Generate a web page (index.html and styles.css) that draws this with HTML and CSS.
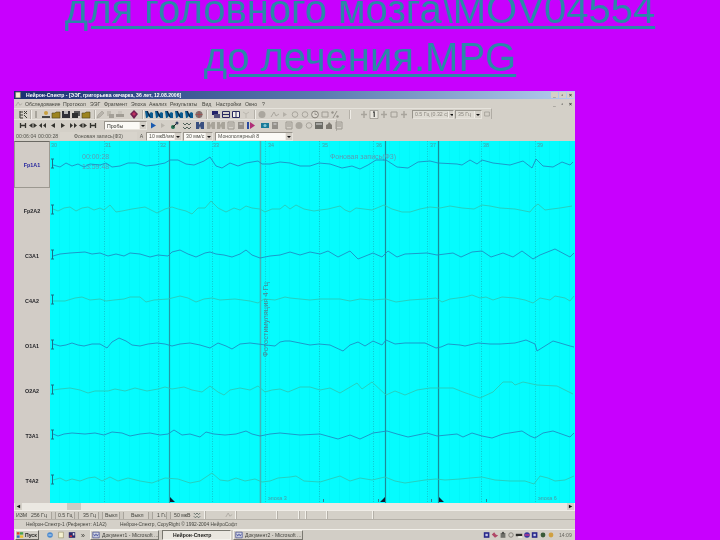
FILE: index.html
```html
<!DOCTYPE html>
<html lang="ru">
<head>
<meta charset="utf-8">
<title>Нейрон-Спектр</title>
<link rel="stylesheet" href="styles.css">
</head>
<body>
<svg class="sprite" aria-hidden="true">
  <symbol id="tree" viewBox="0 0 10 9"><path d="M2 1v7M2 2h3M2 5h3M2 8h3M6 1l3 3M6 4l3-3M6 5l3 3" stroke="#3b3b33" fill="none"/></symbol>
  <symbol id="bulb" viewBox="0 0 10 9"><circle cx="5" cy="3" r="2.4" fill="#3a3a3a"/><path d="M3 6h4v2H3z" fill="#7c7a60"/></symbol>
  <symbol id="user" viewBox="0 0 10 9"><circle cx="5" cy="3" r="2" fill="#c8a040"/><path d="M1 8h8V6H1z" fill="#444"/></symbol>
  <symbol id="folder" viewBox="0 0 10 9"><path d="M1 3h3l1-1h4v6H1z" fill="#9c8420" stroke="#4a4420" stroke-width=".6"/></symbol>
  <symbol id="save" viewBox="0 0 10 9"><path d="M1 1h8v7H1z" fill="#2f2f38"/><path d="M3 1h4v3H3z" fill="#b8b8b8"/></symbol>
  <symbol id="pages" viewBox="0 0 10 9"><path d="M3 1h6v5H3z" fill="#555"/><path d="M1 3h6v5H1z" fill="#2f2f2f"/></symbol>
  <symbol id="pencil" viewBox="0 0 10 9"><path d="M2 8l1-3 4-4 2 2-4 4z" fill="#b8b4ac" stroke="#96928a" stroke-width=".5"/></symbol>
  <symbol id="copy" viewBox="0 0 10 9"><path d="M2 1h4v5H2z" fill="#bdb9b0"/><path d="M4 4h5v4H4z" fill="#a4a098"/></symbol>
  <symbol id="print" viewBox="0 0 10 9"><path d="M1 4h8v3H1z" fill="#a09c94"/><path d="M3 1h4v3H3z" fill="#c8c4bc"/></symbol>
  <symbol id="gem" viewBox="0 0 10 9"><path d="M5 0l4 4-4 5-4-5z" fill="#702050"/><path d="M3 4l2-2 2 2-2 2z" fill="#c03060"/></symbol>
  <symbol id="fig" viewBox="0 0 10 9"><path d="M1 1h3l1 3 2-2 2 1v5H6L5 6 3 8H2z" fill="#0a5a90"/><path d="M3 1l3 6" stroke="#101830"/></symbol>
  <symbol id="ball" viewBox="0 0 10 9"><circle cx="5" cy="4.500" r="3.500" fill="#807070"/><path d="M1.500 4.500h7M5 1v7" stroke="#a84848" stroke-width=".7"/></symbol>
  <symbol id="w1" viewBox="0 0 10 9"><path d="M1 1h6v4H1z" fill="#22226a"/><path d="M3 4h6v4H3z" fill="#505078"/></symbol>
  <symbol id="w2" viewBox="0 0 10 9"><path d="M1.500 1.500h7v6h-7zM1.500 4.500h7" fill="none" stroke="#2a2a60"/></symbol>
  <symbol id="w3" viewBox="0 0 10 9"><path d="M1.500 1.500h7v6h-7zM5 1.500v6" fill="#f2f0ea" stroke="#2a2a60"/></symbol>
  <symbol id="gx" viewBox="0 0 10 9"><path d="M2 2l3 2 3-2M5 4v4" stroke="#bcb8b0" fill="none"/></symbol>
  <symbol id="gc" viewBox="0 0 10 9"><circle cx="5" cy="4.500" r="3.500" fill="#aaa69e"/></symbol>
  <symbol id="gr" viewBox="0 0 10 9"><circle cx="5" cy="4.500" r="2.800" fill="none" stroke="#a8a49c"/></symbol>
  <symbol id="gt" viewBox="0 0 10 9"><path d="M3 2l4 2.500L3 7z" fill="#b4b0a8"/></symbol>
  <symbol id="gw" viewBox="0 0 10 9"><path d="M1 7l3-5 2 4 3-2" fill="none" stroke="#aaa69e"/></symbol>
  <symbol id="clock" viewBox="0 0 10 9"><circle cx="5" cy="4.500" r="3.400" fill="#dcd8d0" stroke="#85817a"/><path d="M5 2.500v2h2" stroke="#85817a" fill="none" stroke-width=".7"/></symbol>
  <symbol id="sq" viewBox="0 0 10 9"><path d="M2 2h6v5H2z" fill="none" stroke="#a09c94"/></symbol>
  <symbol id="pct" viewBox="0 0 10 9"><path d="M7 1L3 8" stroke="#96928a"/><circle cx="2.500" cy="2.500" r="1.200" fill="#96928a"/><circle cx="7.500" cy="6.500" r="1.200" fill="#96928a"/></symbol>
  <symbol id="bars" viewBox="0 0 10 9"><path d="M4 1h2v7H4z" fill="#a8a49c"/></symbol>
  <symbol id="cross" viewBox="0 0 10 9"><path d="M5 1v7M2 4.500h6" stroke="#a8a49c" stroke-width="1.500"/></symbol>
  <symbol id="one" viewBox="0 0 10 9"><path d="M1 .5h8v8H1z" fill="#e8e5de" stroke="#85817a" stroke-width=".6"/><path d="M4 2.500l1.200-1V7" stroke="#222" fill="none"/></symbol>
  <symbol id="n1" viewBox="0 0 10 9"><path d="M2.500 2v5M7.500 2v5M2.500 4.500h5" stroke="#33332e" stroke-width="1.300"/></symbol>
  <symbol id="n2" viewBox="0 0 10 9"><path d="M1 4.500L4.500 2v5zM9 4.500L5.500 2v5z" fill="#33332e"/></symbol>
  <symbol id="n3" viewBox="0 0 10 9"><path d="M1 4.500L4 2v5zM5 4.500L8 2v5z" fill="#33332e"/></symbol>
  <symbol id="n4" viewBox="0 0 10 9"><path d="M3 4.500L7 2v5z" fill="#33332e"/></symbol>
  <symbol id="n5" viewBox="0 0 10 9"><path d="M7 4.500L3 2v5z" fill="#33332e"/></symbol>
  <symbol id="n6" viewBox="0 0 10 9"><path d="M9 4.500L6 2v5zM5 4.500L2 2v5z" fill="#33332e"/></symbol>
  <symbol id="b1" viewBox="0 0 10 9"><path d="M8 4.500L3 1.500v6z" fill="#1a5ab0"/></symbol>
  <symbol id="g1" viewBox="0 0 10 9"><path d="M7 4.500L3 2v5z" fill="#b8b4ac"/></symbol>
  <symbol id="gn" viewBox="0 0 10 9"><circle cx="3" cy="6" r="2" fill="#1e6e50"/><path d="M3 6l4-4" stroke="#222"/><circle cx="7" cy="2" r="1.500" fill="#304060"/></symbol>
  <symbol id="sw" viewBox="0 0 10 9"><path d="M1 2l2 2 2-2 2 2 2-2M1 6l2 2 2-2 2 2 2-2" fill="none" stroke="#50605a"/></symbol>
  <symbol id="bm" viewBox="0 0 10 9"><path d="M1 1h3v3l2-3h3v7H6L5 5 4 8H1z" fill="#3a5080"/></symbol>
  <symbol id="gm" viewBox="0 0 10 9"><path d="M1 1h3v3l2-3h3v7H6L5 5 4 8H1z" fill="#a8a49a"/></symbol>
  <symbol id="mg" viewBox="0 0 10 9"><path d="M1 1h2v7H1z" fill="#2a4aa0"/><path d="M4 1l5 3.500L4 8z" fill="#b03078"/></symbol>
  <symbol id="tl" viewBox="0 0 10 9"><path d="M1 2h8v5H1z" fill="#1a7a98"/><circle cx="5" cy="4.500" r="1.500" fill="#86c8d8"/></symbol>
  <symbol id="gp" viewBox="0 0 10 9"><path d="M2 1h6v7H2z" fill="#94908a"/><path d="M3.500 3h3" stroke="#ddd"/></symbol>
  <symbol id="gd" viewBox="0 0 10 9"><path d="M2 1h6v7H2z" fill="none" stroke="#9c9890"/><path d="M3 3h4M3 5h4" stroke="#9c9890"/></symbol>
  <symbol id="cal" viewBox="0 0 10 9"><path d="M1 1h8v7H1z" fill="#6c6c66"/><path d="M2 3h6" stroke="#ddd"/></symbol>
  <symbol id="hand" viewBox="0 0 10 9"><path d="M2 8V4l2-1 1-2 2 2 1 1v4z" fill="#7e7a72"/></symbol>
  <symbol id="flag" viewBox="0 0 10 9"><path d="M1 1h3.500v3H1z" fill="#d84828"/><path d="M5 1h4v3H5z" fill="#48a048"/><path d="M1 5h3.500v3H1z" fill="#3068c0"/><path d="M5 5h4v3H5z" fill="#e8c030"/></symbol>
  <symbol id="ie" viewBox="0 0 10 9"><circle cx="5" cy="4.500" r="3.500" fill="#4a8ad0"/><path d="M3 4.500h4" stroke="#e8f0f8"/></symbol>
  <symbol id="doc" viewBox="0 0 10 9"><path d="M2 1h6v7H2z" fill="#f4f0d0" stroke="#807a50" stroke-width=".6"/></symbol>
  <symbol id="mix" viewBox="0 0 10 9"><path d="M1 1h8v7H1z" fill="#28286c"/><path d="M2 5h3v2H2z" fill="#c83040"/><path d="M6 2h2v3H6z" fill="#d8d8e0"/></symbol>
  <symbol id="word" viewBox="0 0 10 9"><path d="M1 1h8v7H1z" fill="#d8dce8" stroke="#303888" stroke-width=".8"/><path d="M2 3l1.500 3L5 3l1.500 3L8 3" stroke="#2a3490" fill="none" stroke-width=".8"/></symbol>
  <symbol id="tdk" viewBox="0 0 10 9"><path d="M1 1h7v7H1z" fill="#28288a"/><path d="M3 3h3v3H3z" fill="#c8c8e8"/></symbol>
  <symbol id="tpk" viewBox="0 0 10 9"><path d="M1 4l3-3 2 3 3 1-4 3z" fill="#b04868"/></symbol>
  <symbol id="tgr" viewBox="0 0 10 9"><path d="M2 2h6v6H2z" fill="#70706a"/><circle cx="5" cy="2" r="1.500" fill="#50504c"/></symbol>
  <symbol id="tcl" viewBox="0 0 10 9"><circle cx="5" cy="4.500" r="2.800" fill="none" stroke="#78746c"/></symbol>
  <symbol id="tbk" viewBox="0 0 10 9"><path d="M1 3h8v3H1z" fill="#2c2c28"/><path d="M4 6h5v2H4z" fill="#f0f0e8"/></symbol>
  <symbol id="tmg" viewBox="0 0 10 9"><circle cx="5" cy="4.500" r="3.500" fill="#3838a0"/><path d="M2 4.500h6" stroke="#d83890" stroke-width="1.500"/></symbol>
  <symbol id="tgn" viewBox="0 0 10 9"><circle cx="5" cy="4.500" r="3" fill="#3a5a38"/></symbol>
  <symbol id="tyl" viewBox="0 0 10 9"><circle cx="5" cy="4.500" r="3" fill="#d0a040"/></symbol>
</svg>

<h1 class="headline"><a class="headline-link" href="#">для головного мозга\MOV04554<br>до лечения.MPG</a></h1>

<main class="app">
  <header class="titlebar">
    <svg class="ic-s"><use href="#doc"/></svg>
    <span class="title-text">Нейрон-Спектр - [ЭЭГ, григорьева овчарка, 36 лет, 12.08.2006]</span>
    <span class="win-btns"><b class="win-btn">_</b><b class="win-btn">▫</b><b class="win-btn">×</b></span>
  </header>
  <nav class="menubar">
    <svg class="ic-s menu-logo"><use href="#gw"/></svg>
    <span class="m1">Обследование</span><span class="m2">Протокол</span><span class="m3">ЭЭГ</span><span class="m4">Фрагмент</span><span class="m5">Эпоха</span><span class="m6">Анализ</span><span class="m7">Результаты</span><span class="m8">Вид</span><span class="m9">Настройки</span><span class="m10">Окно</span><span class="m11">?</span>
    <span class="win-btns"><b class="win-btn">_</b><b class="win-btn">▫</b><b class="win-btn">×</b></span>
  </nav>
  <div class="toolbar tb1">
    <svg class="ic"><use href="#tree"/></svg><i class="sep s1"></i>
    <svg class="ic"><use href="#bars"/></svg><svg class="ic"><use href="#user"/></svg><svg class="ic"><use href="#folder"/></svg><svg class="ic"><use href="#save"/></svg><svg class="ic"><use href="#pages"/></svg><svg class="ic"><use href="#folder"/></svg><i class="sep s2"></i>
    <svg class="ic"><use href="#pencil"/></svg><svg class="ic"><use href="#copy"/></svg><svg class="ic"><use href="#print"/></svg><svg class="ic gem"><use href="#gem"/></svg><i class="sep s3"></i>
    <svg class="ic first-d"><use href="#fig"/></svg><svg class="ic"><use href="#fig"/></svg><svg class="ic"><use href="#fig"/></svg><svg class="ic"><use href="#fig"/></svg><svg class="ic"><use href="#fig"/></svg><svg class="ic"><use href="#ball"/></svg><i class="sep s4"></i>
    <svg class="ic first-e"><use href="#w1"/></svg><svg class="ic"><use href="#w2"/></svg><svg class="ic"><use href="#w3"/></svg><svg class="ic"><use href="#gx"/></svg><i class="sep s5"></i>
    <svg class="ic first-f"><use href="#gc"/></svg><svg class="ic second-f"><use href="#gw"/></svg><svg class="ic"><use href="#gt"/></svg><svg class="ic"><use href="#gr"/></svg><svg class="ic"><use href="#gr"/></svg><svg class="ic"><use href="#clock"/></svg><svg class="ic"><use href="#sq"/></svg><svg class="ic"><use href="#pct"/></svg><i class="sep s6"></i>
    <svg class="ic first-g"><use href="#cross"/></svg><svg class="ic"><use href="#one"/></svg><svg class="ic"><use href="#cross"/></svg><svg class="ic"><use href="#sq"/></svg><svg class="ic"><use href="#cross"/></svg>
    <span class="combo c-freq off"><span class="combo-text">0.5 Гц (0.32 с)</span><b class="arrow"></b></span>
    <span class="combo c-hi off"><span class="combo-text">35 Гц</span><b class="arrow"></b></span>
    <svg class="ic-s"><use href="#sq"/></svg>
  </div>
  <div class="toolbar tb2">
    <svg class="ic"><use href="#n1"/></svg><svg class="ic"><use href="#n2"/></svg><svg class="ic"><use href="#n3"/></svg><svg class="ic"><use href="#n4"/></svg><svg class="ic"><use href="#n5"/></svg><svg class="ic"><use href="#n6"/></svg><svg class="ic"><use href="#n2"/></svg><svg class="ic"><use href="#n1"/></svg>
    <span class="combo c-probe"><span class="combo-text">Пробы</span><b class="arrow"></b></span>
    <svg class="ic"><use href="#b1"/></svg><svg class="ic"><use href="#g1"/></svg>
    <svg class="ic t2a"><use href="#gn"/></svg><svg class="ic t2b"><use href="#sw"/></svg>
    <svg class="ic t2c"><use href="#bm"/></svg><svg class="ic t2d"><use href="#gm"/></svg><svg class="ic"><use href="#gm"/></svg><svg class="ic"><use href="#gd"/></svg><svg class="ic"><use href="#gp"/></svg><svg class="ic"><use href="#mg"/></svg>
    <svg class="ic t2e"><use href="#tl"/></svg><svg class="ic"><use href="#gp"/></svg>
    <svg class="ic t2f"><use href="#gd"/></svg><svg class="ic t2g"><use href="#gc"/></svg><svg class="ic"><use href="#gr"/></svg><svg class="ic"><use href="#cal"/></svg><svg class="ic"><use href="#hand"/></svg><svg class="ic"><use href="#gd"/></svg>
  </div>
  <div class="infobar">
    <span class="t-pos">00:06:04</span><span class="t-len">00:00:28</span>
    <span class="info-state">Фоновая запись(Ф3)</span>
    <span class="info-a">А</span>
    <span class="combo c-sens"><span class="combo-text">10 мкВ/мм</span><b class="arrow"></b></span>
    <span class="combo c-speed"><span class="combo-text">30 мм/с</span><b class="arrow"></b></span>
    <span class="combo c-mont"><span class="combo-text">Монополярный 8</span><b class="arrow"></b></span>
  </div>
  <section class="eeg">
    <div class="channels">
      <div class="chan chan-active">Fp1A1</div>
      <div class="chan">Fp2A2</div>
      <div class="chan">C3A1</div>
      <div class="chan">C4A2</div>
      <div class="chan">O1A1</div>
      <div class="chan">O2A2</div>
      <div class="chan">T3A1</div>
      <div class="chan">T4A2</div>
    </div>
    <svg class="plot" viewBox="50 141 525 362" width="525" height="362">
      <g class="sec-lines">
        <path d="M104.500 141V503M158.500 141V503M212.500 141V503M265.500 141V503M319.500 141V503M373.500 141V503M427.500 141V503M481.500 141V503M535.500 141V503"/>
      </g>
      <g class="mark-lines">
        <path class="mark-a" d="M169.500 141V503"/>
        <path class="mark-b" d="M260.500 141V503"/>
        <path class="mark-c" d="M385.500 141V503"/>
        <path class="mark-c" d="M438.500 141V503"/>
      </g>
      <path class="wedge" d="M170 497l5 5h-5zM385 497l-5 5h5zM439 497l5 5h-5z"/>
      <path class="ticks" d="M323.500 499v3M378.500 499v3M431.500 499v3M486.500 499v3"/>
      <g class="sec-nums">
        <text x="51" y="147">30</text><text x="105" y="147">31</text><text x="160" y="147">32</text><text x="213" y="147">33</text><text x="268" y="147">34</text><text x="322" y="147">35</text><text x="376" y="147">36</text><text x="430" y="147">37</text><text x="483" y="147">38</text><text x="537" y="147">39</text>
      </g>
      <g class="overlay-text">
        <text x="82" y="159">00:00:28</text>
        <text x="82" y="169">13:59:48</text>
        <text x="330" y="159">Фоновая запись(Ф3)</text>
      </g>
      <text class="vert-text" transform="translate(268 357) rotate(-90)">Фотостимуляция 4 Гц</text>
      <g class="sec-nums"><text x="268" y="500">эпоха 3</text><text x="538" y="500">эпоха 6</text></g>
      <path class="cal" d="M51 159h3M52.500 159v9M51 168h3M51 205h3M52.500 205v9M51 214h3M51 250h3M52.500 250v9M51 259h3M51 295h3M52.500 295v9M51 304h3M51 340h3M52.500 340v9M51 349h3M51 385h3M52.500 385v9M51 394h3M51 430h3M52.500 430v9M51 439h3M51 475h3M52.500 475v9M51 484h3"/>
      <polyline class="tr-b" points="53,165 60,167 66,163 72,166 78,164 84,167 90,164 100,165 106,163 112,167 120,166 128,163 136,163 146,166 155,165 165,163 170,160 178,160 186,164 194,165 204,161 210,157 216,166 222,168 230,163 238,166 246,163 258,161 262,164 270,164 280,162 290,163 300,166 310,166 319,163 330,164 342,168 352,166 360,169 368,165 376,160 386,160 397,167 408,168 418,162 430,161 438,163 457,164 462,165 470,160 477,164 482,160 493,163 510,165 523,161 532,168 536,159 543,166 553,167 562,162 570,165 573,162"/>
      <polyline class="tr-g" points="53,209 58,211 64,208 70,207 76,211 82,208 88,207 94,210 100,208 104,210 110,205 116,212 122,211 132,209 145,207 157,213 165,209 172,207 178,209 186,211 192,214 198,208 205,208 211,201 218,208 226,212 234,208 240,210 246,206 252,208 260,209 265,212 272,209 280,209 285,205 290,209 296,205 304,209 314,211 320,210 328,209 340,206 345,210 350,212 356,208 364,209 372,210 384,205 392,209 402,212 410,212 420,209 430,207 440,208 450,206 462,208 474,209 482,205 490,206 500,208 515,209 530,212 534,207 538,204 545,210 552,209 560,208 572,206"/>
      <polyline class="tr-b" points="53,256 60,254 70,253 85,252 92,254 100,253 108,256 116,254 124,256 130,253 140,254 150,257 158,255 168,256 172,252 180,250 188,254 196,257 205,253 210,252 216,254 224,255 232,257 240,254 246,250 252,255 260,258 270,256 280,255 290,252 300,255 310,252 320,254 328,251 338,257 350,251 358,259 373,253 382,257 388,251 397,257 405,254 427,253 437,255 453,253 461,257 472,252 482,251 491,257 503,253 513,257 522,251 533,259 540,255 555,249 570,257 574,253"/>
      <polyline class="tr-g" points="53,301 65,301 75,298 82,297 90,300 100,299 106,301 114,300 124,299 130,297 140,297 146,302 154,300 168,299 180,296 188,298 196,302 204,299 212,298 220,300 235,299 250,301 258,303 264,299 275,300 285,297 290,298 310,300 320,299 340,299 350,301 360,299 372,300 386,299 396,302 410,300 425,299 436,298 442,302 450,299 465,297 472,295 480,298 486,297 493,300 502,297 515,298 525,300 533,303 540,298 550,300 555,296 565,298 570,301 574,296"/>
      <polyline class="tr-b" points="53,344 60,346 66,345 72,343 78,345 84,346 92,344 100,344 107,348 112,342 119,338 126,341 132,345 140,346 148,344 157,343 165,344 172,346 180,344 190,343 200,345 210,348 218,343 226,346 232,349 240,344 250,343 258,344 266,345 275,346 280,342 285,341 290,341 300,343 310,345 319,344 330,345 343,351 350,345 358,342 365,346 373,341 382,345 386,340 395,344 405,343 425,343 436,348 441,347 448,344 460,345 465,346 478,343 490,344 500,344 515,343 526,340 535,344 537,351 545,346 553,341 560,343 570,346 574,347"/>
      <polyline class="tr-g" points="53,390 60,389 70,388 80,390 88,393 95,391 108,391 115,389 125,391 135,388 147,391 158,389 165,387 172,389 184,387 192,390 202,392 210,386 218,392 224,395 230,390 240,388 250,390 258,386 265,392 272,390 280,389 288,392 300,387 310,387 320,390 330,388 340,393 357,383 362,389 372,382 386,395 395,391 405,395 417,390 430,388 453,388 463,392 480,398 493,392 503,382 512,382 515,385 523,382 537,385 557,386 573,394"/>
      <polyline class="tr-b" points="53,434 58,436 64,434 72,433 85,434 95,433 104,435 112,432 122,433 130,436 140,434 150,433 160,435 168,434 174,430 182,435 190,434 200,437 206,432 214,434 225,435 236,434 246,431 252,434 260,436 270,434 280,433 290,434 300,435 320,434 338,439 350,435 360,439 373,433 387,431 397,434 408,437 427,433 437,436 457,434 463,437 472,433 482,436 492,438 503,434 522,431 530,436 535,438 543,433 553,431 570,437 574,433"/>
      <polyline class="tr-g" points="53,480 60,478 66,481 72,479 80,481 88,478 95,477 102,481 110,477 118,481 128,478 140,481 152,483 165,478 178,479 190,483 200,481 212,473 220,480 228,481 236,478 245,481 255,479 262,482 270,481 278,478 290,477 296,476 304,481 320,482 340,476 350,481 360,478 372,480 385,477 395,481 405,483 425,480 436,479 445,480 460,479 470,478 482,477 495,480 510,481 525,481 534,484 540,476 548,478 555,481 565,480 574,476"/>
    </svg>
  </section>
  <div class="scrollbar">
    <b class="scroll-btn">◂</b>
    <span class="scroll-thumb"></span>
    <b class="scroll-btn scroll-end">▸</b>
  </div>
  <div class="params">
    <span class="p-izm">ИЗМ</span><span class="p-rate">256 Гц</span><i class="pbtn"></i><span class="p-lo">0.5 Гц</span><i class="pbtn"></i><span class="p-hi">35 Гц</span><i class="pbtn"></i><span class="p-off">Выкл</span><i class="pbtn"></i><span class="p-off2">Выкл</span><i class="pbtn"></i><span class="p-cal">1 Гц</span><i class="pbtn"></i><span class="p-amp">50 мкВ</span>
    <svg class="ic-s p-ic"><use href="#sw"/></svg><i class="pdiv d1"></i><svg class="ic-s p-ic2"><use href="#gw"/></svg><i class="pdiv d2"></i><i class="pdiv d3"></i><i class="pdiv d4"></i><i class="pdiv d5"></i><i class="pdiv d6"></i><i class="pdiv d7"></i>
  </div>
  <div class="statusbar">
    <span class="st-a">Нейрон-Спектр-1 (Референт: A1A2)</span>
    <span class="st-b">Нейрон-Спектр, CopyRight © 1992-2004 НейроСофт</span>
  </div>
  <footer class="taskbar">
    <span class="start"><svg class="ic-s"><use href="#flag"/></svg>Пуск</span>
    <svg class="ic-s ql1"><use href="#ie"/></svg><svg class="ic-s ql"><use href="#doc"/></svg><svg class="ic-s ql"><use href="#mix"/></svg><span class="chev">»</span>
    <span class="task t1"><svg class="ic-s"><use href="#word"/></svg>Документ1 - Microsoft ...</span>
    <span class="task t2 task-on">Нейрон-Спектр</span>
    <span class="task t3"><svg class="ic-s"><use href="#word"/></svg>Документ2 - Microsoft ...</span>
    <span class="tray">
      <svg class="ic-s"><use href="#tdk"/></svg><svg class="ic-s"><use href="#tpk"/></svg><svg class="ic-s"><use href="#tgr"/></svg><svg class="ic-s"><use href="#tcl"/></svg><svg class="ic-s"><use href="#tbk"/></svg><svg class="ic-s"><use href="#tmg"/></svg><svg class="ic-s"><use href="#tdk"/></svg><svg class="ic-s"><use href="#tgn"/></svg><svg class="ic-s"><use href="#tyl"/></svg>
      <span class="clock">14:09</span>
    </span>
  </footer>
</main>
</body>
</html>
```

FILE: styles.css
```css
* { box-sizing: border-box; }
html, body { margin: 0; padding: 0; }
body {
  width: 720px;
  height: 540px;
  overflow: hidden;
  background: #c800fe;
  font-family: "Liberation Sans", Arial, sans-serif;
}
.sprite { display: none; }

.headline {
  margin: -15px 0 10px;
  height: 96px;
  font-size: 40px;
  line-height: 48px;
  font-weight: 400;
  text-align: center;
  filter: blur(.5px);
}
.headline-link {
  color: #2a88a8;
  text-decoration: underline;
  text-decoration-thickness: 3px;
  text-underline-offset: 3px;
}

.app {
  margin-left: 14px;
  width: 561px;
  height: 449px;
  display: flex;
  flex-direction: column;
  background: #d4d0c8;
  font-size: 5.6px;
  color: #33332e;
  filter: blur(.45px);
  overflow: hidden;
}
.ic { width: 10px; height: 9px; flex: none; }
.ic-s { width: 8px; height: 8px; flex: none; }

.titlebar {
  height: 8px;
  display: flex;
  align-items: center;
  background: linear-gradient(90deg, #1a2f72 0%, #5a7cb0 55%, #b4cdee 100%);
  color: #fff;
  font-weight: 700;
  flex: none;
}
.title-text { margin-left: 4px; font-size: 5.1px; white-space: nowrap; }
.win-btns { margin-left: auto; display: flex; gap: 1px; padding-right: 1px; }
.win-btn {
  width: 7px;
  height: 6px;
  background: #d4d0c8;
  color: #222;
  font-size: 5px;
  line-height: 6px;
  text-align: center;
}
.menubar {
  height: 9px;
  flex: none;
  display: flex;
  align-items: center;
  white-space: nowrap;
  font-size: 5.2px;
  color: #44443e;
}
.menu-logo { margin-left: 1px; }
.m1 { margin-left: 2px; width: 38px; }
.m2 { width: 27px; }
.m3 { width: 14px; }
.m4 { width: 27px; }
.m5 { width: 18px; }
.m6 { width: 21px; }
.m7 { width: 32px; }
.m8 { width: 14px; }
.m9 { width: 29px; }
.m10 { width: 17px; }

.toolbar {
  height: 11px;
  flex: none;
  display: flex;
  align-items: center;
  padding-left: 4px;
  border-top: 1px solid #e6e3dc;
  background: #d4d0c8;
}
.tb1 { width: 478px; border-right: 1px solid #b0aca4; }
.tb2 { width: 323px; height: 12px; border-right: 1px solid #b0aca4; }
.sep { width: 1px; height: 9px; flex: none; background: #b4b0a8; box-shadow: 1px 0 0 #efece6; }
.s1 { margin-left: 2px; }
.s2 { margin-left: 3px; margin-right: 0; }
.s3 { margin-left: 3px; }
.s4 { margin-left: 2px; }
.s5 { margin-left: 3px; }
.s6 { margin-left: 9px; }
.gem { margin-left: 4px; }
.first-d { margin-left: 1px; }
.first-e { margin-left: 4px; }
.first-f { margin-left: 2px; }
.second-f { margin-left: 3px; }
.first-g { margin-left: 9px; }

.combo {
  height: 9px;
  flex: none;
  display: flex;
  align-items: center;
  justify-content: space-between;
  background: #fbfaf6;
  border: 1px solid #98948c;
  border-right-color: #e6e3dc;
  border-bottom-color: #e6e3dc;
  font-size: 5.2px;
  white-space: nowrap;
  overflow: hidden;
}
.combo-text { padding-left: 2px; }
.arrow {
  position: relative;
  width: 7px;
  height: 100%;
  flex: none;
  background: #d4d0c8;
  border-left: 1px solid #efece6;
}
.arrow::after {
  content: "";
  position: absolute;
  left: 1px;
  top: 3px;
  border: 2px solid transparent;
  border-top: 2px solid #111;
}
.off { background: #dedbd3; color: #8a867e; }
.c-freq { width: 42px; margin-left: 3px; }
.c-hi { width: 27px; margin-left: 1px; margin-right: 1px; }
.c-probe { width: 43px; margin-left: 6px; margin-right: 1px; }
.t2a { margin-left: 2px; }
.t2b { margin-left: 2px; }
.t2c { margin-left: 3px; }
.t2d { margin-left: 1px; }
.t2e { margin-left: 4px; }
.t2f { margin-left: 4px; }
.t2g { margin-left: 0; }

.infobar {
  height: 10px;
  flex: none;
  display: flex;
  align-items: center;
  white-space: nowrap;
  font-size: 5.2px;
  color: #55554e;
}
.t-pos { margin-left: 2px; width: 22px; }
.t-len { width: 22px; }
.info-state {
  width: 77px;
  height: 8px;
  line-height: 8px;
  text-align: center;
  background: #d8d4cc;
  color: #55554e;
}
.info-a { width: 9px; text-align: center; }
.c-sens { width: 36px; }
.c-speed { width: 30px; margin-left: 1px; }
.c-mont { width: 78px; margin-left: 2px; }

.eeg {
  height: 362px;
  flex: none;
  display: flex;
}
.channels {
  width: 36px;
  flex: none;
  display: flex;
  flex-direction: column;
  background: #d2ccc6;
}
.chan {
  flex: 1;
  display: flex;
  align-items: center;
  justify-content: center;
  font-weight: 700;
  font-size: 5.4px;
  color: #26262a;
}
.chan-active {
  color: #1e1e9c;
  border: 1px solid #9c9890;
  border-top-color: #6a6862;
}
.plot {
  flex: none;
  display: block;
  background-color: #05fcfe;
  background-image: repeating-linear-gradient(90deg, transparent 0, transparent 9px, #02f7fa 9px, #02f7fa 10px);
}
.sec-lines path { stroke: #1e9aa8; stroke-width: 1; stroke-dasharray: 1 1.500; fill: none; opacity: .55; }
.mark-lines path { fill: none; }
.mark-a { stroke: #229aa6; stroke-width: 1.200; }
.mark-b { stroke: #44b4b8; stroke-width: 1.500; }
.mark-c { stroke: #1c8c98; stroke-width: 1.200; }
.wedge { fill: #0a1a30; }
.ticks { stroke: #2a8494; fill: none; }
.sec-nums text { font-size: 5.4px; fill: #4a9aa4; }
.overlay-text text { font-size: 7px; fill: #5a9cb4; }
.vert-text { font-size: 7.5px; fill: #4a8494; }
.cal { stroke: #1a7088; fill: none; stroke-width: 1; }
.tr-b, .tr-g { fill: none; stroke-width: .85; stroke-linejoin: round; }
.tr-b { stroke: #2088c0; }
.tr-g { stroke: #2cc8b4; }

.scrollbar {
  height: 7px;
  flex: none;
  display: flex;
  align-items: center;
  background: #ebe8e2;
}
.scroll-btn {
  width: 7px;
  height: 7px;
  flex: none;
  margin-left: 1px;
  background: #d4d0c8;
  color: #111;
  font-size: 6px;
  line-height: 7px;
  text-align: center;
}
.scroll-thumb { width: 14px; height: 7px; margin-left: 45px; background: #cfcbc3; }
.scroll-end { margin-left: auto; margin-right: 1px; }

.params {
  height: 10px;
  flex: none;
  display: flex;
  align-items: center;
  white-space: nowrap;
  font-size: 5.2px;
  color: #44443e;
  border-top: 1px solid #f0ede8;
  border-bottom: 1px solid #b4b0a8;
}
.pbtn { width: 5px; height: 7px; flex: none; background: #cdc9c1; border-left: 1px solid #a8a49c; border-right: 1px solid #a8a49c; }
.p-izm { margin-left: 2px; width: 15px; }
.p-rate { width: 20px; }
.p-lo { margin-left: 2px; width: 16px; }
.p-hi { margin-left: 4px; width: 15px; }
.p-off { margin-left: 2px; width: 14px; }
.p-off2 { margin-left: 7px; width: 17px; }
.p-cal { margin-left: 4px; width: 9px; }
.p-amp { margin-left: 3px; width: 18px; }
.p-ic { margin-left: 1px; }
.pdiv { width: 1px; height: 8px; flex: none; background: #f2f0ea; box-shadow: 1px 0 0 #b4b0a8; }
.d1 { margin-left: 3px; }
.p-ic2 { margin-left: 20px; }
.d2 { margin-left: 2px; }
.d3 { margin-left: 40px; }
.d4 { margin-left: 21px; }
.d5 { margin-left: 6px; }
.d6 { margin-left: 20px; }
.d7 { margin-left: 45px; }

.statusbar {
  height: 9px;
  flex: none;
  display: flex;
  align-items: center;
  white-space: nowrap;
  font-size: 4.85px;
  color: #44443e;
}
.st-a { margin-left: 12px; width: 94px; }
.taskbar {
  flex: 1;
  display: flex;
  align-items: center;
  white-space: nowrap;
  font-size: 5.1px;
  background: #d2cec6;
  border-top: 1px solid #f2f0ea;
}
.start {
  width: 24px;
  height: 10px;
  margin-left: 1px;
  flex: none;
  display: flex;
  align-items: center;
  gap: 1px;
  font-weight: 700;
  color: #1a1a18;
  border: 1px solid #f4f2ec;
  border-right-color: #66645e;
  border-bottom-color: #66645e;
}
.ql1 { margin-left: 7px; }
.ql { margin-left: 3px; }
.chev { width: 10px; margin-left: 2px; text-align: center; font-size: 7px; }
.task {
  height: 10px;
  flex: none;
  display: flex;
  align-items: center;
  gap: 2px;
  padding-left: 1px;
  color: #44443e;
  overflow: hidden;
  border: 1px solid #f4f2ec;
  border-right-color: #7a7870;
  border-bottom-color: #7a7870;
}
.t1 { width: 69px; margin-left: 2px; }
.t2 { width: 69px; margin-left: 3px; }
.t3 { width: 70px; margin-left: 2px; }
.task-on {
  padding-left: 10px;
  font-weight: 700;
  color: #1a1a18;
  background: #eae7e0;
  border-color: #7a7870 #f4f2ec #f4f2ec #7a7870;
}
.tray { margin-left: auto; display: flex; align-items: center; padding-right: 3px; }
.clock { margin-left: 4px; width: 13px; color: #66645e; }
```
